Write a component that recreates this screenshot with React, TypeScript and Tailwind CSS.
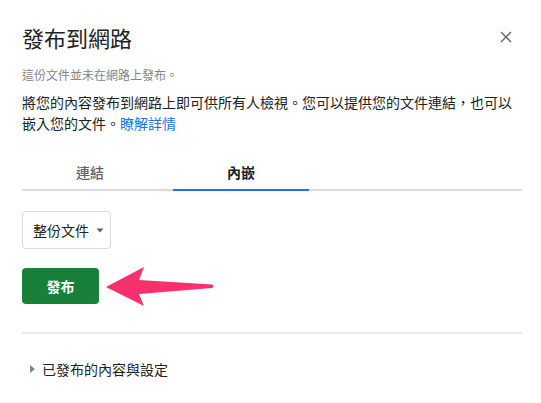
import React from "react";

export default function App() {
  return (
    <div
      className="relative w-[541px] h-[403px] overflow-hidden bg-white pl-[22px] pr-[19px] text-[#202124]"
      style={{ fontFamily: '"Noto Sans CJK TC", "Noto Sans", sans-serif' }}
    >
      <div className="mt-[23px] h-[28px] flex items-center justify-between">
        <h1 className="text-[22px] leading-[28px] font-normal text-[#202124]">發布到網路</h1>
        <button className="mr-[10px] w-[12px] h-[12px] flex items-center justify-center">
          <svg width="12" height="12" viewBox="0 0 12 12">
            <path d="M1 1 L11 11 M11 1 L1 11" stroke="#5f6368" strokeWidth="1.4" fill="none" />
          </svg>
        </button>
      </div>

      <p className="mt-[15px] text-[12px] leading-[18px] text-[#80868b]">這份文件並未在網路上發布。</p>

      <p className="mt-[8px] text-[14px] leading-[21px] text-[#202124]">
        將您的內容發布到網路上即可供所有人檢視。您可以提供您的文件連結，也可以嵌入您的文件。
        <a className="text-[#1a73e8]">瞭解詳情</a>
      </p>

      <div className="mt-[21px] flex gap-[15px] border-b-2 border-[#dadce0]">
        <div className="w-[136px] h-[34px] flex items-center justify-center text-[14px] font-medium text-[#5f6368]">
          連結
        </div>
        <div className="w-[136px] h-[34px] -mb-[2px] box-content border-b-2 border-[#1a73e8] flex items-center justify-center text-[14px] font-bold text-[#202124]">
          內嵌
        </div>
      </div>

      <div className="mt-[20px] w-[89px] h-[38px] rounded-[4px] border border-[#dadce0] flex items-center pl-[10px] gap-[7px] text-[14px] text-[#202124]">
        <span>整份文件</span>
        <svg width="8" height="5" viewBox="0 0 8 5">
          <path d="M0.5 0.5 L7.5 0.5 L4 4.5 Z" fill="#5f6368" />
        </svg>
      </div>

      <button className="mt-[19px] w-[77px] h-[36px] rounded-[4px] bg-[#188038] text-white text-[14px] font-bold flex items-center justify-center">
        發布
      </button>

      <div className="mt-[28px] h-[2px] bg-[#e8eaed]" />

      <div className="mt-[25px] h-[20px] flex items-center text-[14px] text-[#202124]">
        <svg width="5" height="8" viewBox="0 0 5 8" className="ml-[8px] mr-[7px]">
          <path d="M0 0 L5 4 L0 8 Z" fill="#80868b" />
        </svg>
        <span>已發布的內容與設定</span>
      </div>

      <svg
        className="absolute left-0 top-0 pointer-events-none"
        width="541"
        height="403"
        viewBox="0 0 541 403"
      >
        <path
          d="M106 287 L144 267 L139 280 L212 284.5 Q215 286 212 288 L139 294 L144 306 Z"
          fill="#f8306d"
        />
      </svg>
    </div>
  );
}
